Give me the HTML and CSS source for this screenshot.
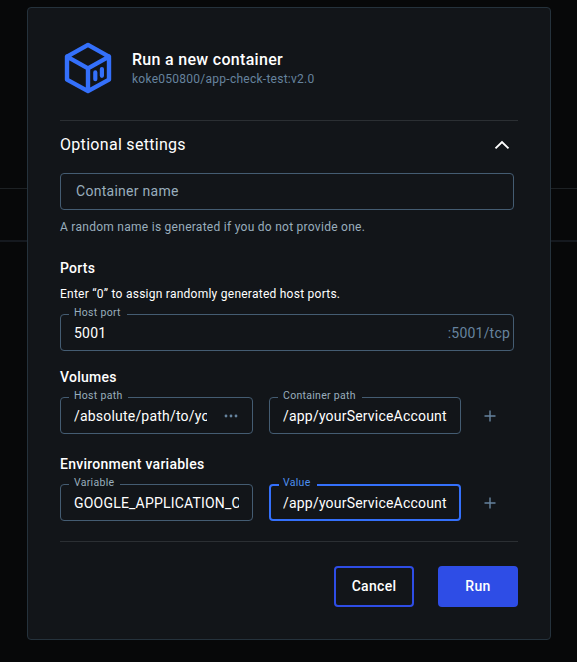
FILE: index.html
```html
<!DOCTYPE html>
<html lang="en">
<head>
<meta charset="utf-8">
<title>Run a new container</title>
<link rel="stylesheet" href="styles.css">
</head>
<body>
<div class="backdrop"><div class="backdrop-row"></div><div class="backdrop-row backdrop-row-second"></div></div>
<main class="dialog">
  <header class="header">
    <svg class="logo" width="48" height="52" viewBox="0 0 48 52" fill="none" stroke="#3470fb" stroke-linejoin="round" stroke-linecap="round">
      <path stroke-width="4.4" d="M24 2.9 45 14.6V37.6L24 49.1 3 37.6V14.6ZM3 14.6 24 26.3 45 14.6M24 26.3V49"/>
      <path stroke-width="4.2" d="M31.3 30.4V37.2M37.9 27V33.8"/>
    </svg>
    <div class="titles">
      <h1 class="title">Run a new container</h1>
      <p class="image-name">koke050800/app-check-test:v2.0</p>
    </div>
  </header>
  <section class="settings">
    <div class="summary">
      <h2 class="summary-title">Optional settings</h2>
      <svg width="16" height="10" viewBox="0 0 16 10" fill="none" stroke="#fff" stroke-width="1.9"><path d="M1.5 8.4 8 2l6.5 6.4"/></svg>
    </div>
    <div class="field field-name"><span class="placeholder">Container name</span></div>
    <p class="helper">A random name is generated if you do not provide one.</p>
    <h3 class="group-title ports-title">Ports</h3>
    <p class="ports-note">Enter “0” to assign randomly generated host ports.</p>
    <div class="field field-port">
      <span class="label">Host port</span>
      <span class="value">5001</span>
      <span class="suffix">:5001/tcp</span>
    </div>
    <h3 class="group-title">Volumes</h3>
    <div class="row">
      <div class="field">
        <span class="label">Host path</span>
        <span class="value">/absolute/path/to/yourServiceAccount</span>
        <svg class="dots" width="14" height="4" viewBox="0 0 14 4" fill="#66839e"><circle cx="2" cy="2" r="1.4"/><circle cx="7" cy="2" r="1.4"/><circle cx="12" cy="2" r="1.4"/></svg>
      </div>
      <div class="field">
        <span class="label">Container path</span>
        <span class="value">/app/yourServiceAccount</span>
      </div>
      <svg class="plus" width="12" height="12" viewBox="0 0 12 12" stroke="#66839e" stroke-width="1.4"><path d="M.5 6h11M6 .5v11"/></svg>
    </div>
    <h3 class="group-title env-title">Environment variables</h3>
    <div class="row">
      <div class="field">
        <span class="label">Variable</span>
        <span class="value">GOOGLE_APPLICATION_CREDENTIALS</span>
      </div>
      <div class="field focused">
        <span class="label">Value</span>
        <span class="value">/app/yourServiceAccount</span>
      </div>
      <svg class="plus" width="12" height="12" viewBox="0 0 12 12" stroke="#66839e" stroke-width="1.4"><path d="M.5 6h11M6 .5v11"/></svg>
    </div>
  </section>
  <footer class="actions">
    <button class="button">Cancel</button>
    <button class="button primary">Run</button>
  </footer>
</main>
</body>
</html>
```
FILE: styles.css
```css
* { box-sizing: border-box; }
body {
  margin: 0;
  height: 662px;
  padding: 7px 26px 0 27px;
  background: #070809;
  font-family: Roboto, sans-serif;
  color: #fff;
  overflow: hidden;
}
h1, h2, h3, p { margin: 0; }
.backdrop { position: absolute; inset: 0; height: 661px; z-index: -1; }
.backdrop-row { height: 189px; border-bottom: 1px solid #1d2124; }
.backdrop-row-second { height: 53px; border-bottom: 2px solid #15191f; }
.dialog {
  width: 524px;
  height: 633px;
  padding: 0 32px;
  background: #121519;
  border: 1px solid #25323c;
  border-radius: 4px;
}
.header {
  display: flex;
  align-items: center;
  gap: 20px;
  height: 113px;
  padding: 7px 0 0 4px;
  border-bottom: 1px solid #2b2f33;
}
.logo { flex: none; }
.titles { padding-top: 2px; }
.title { font-size: 16px; line-height: 20px; font-weight: 500; letter-spacing: .3px; }
.image-name { font-size: 12px; line-height: 18px; letter-spacing: .26px; color: #66839e; }
.settings { height: 421px; border-bottom: 1px solid #2b2f33; }
.summary {
  display: flex;
  align-items: center;
  justify-content: space-between;
  height: 48px;
  padding-right: 8px;
}
.summary-title { font-size: 16px; line-height: 20px; font-weight: 400; letter-spacing: .3px; }
.field {
  position: relative;
  display: flex;
  align-items: center;
  height: 37px;
  padding: 0 13px;
  border: 1px solid #445c72;
  border-radius: 4px;
  font-size: 14px;
  line-height: 20px;
  letter-spacing: .2px;
}
.field-name, .field-port { width: 454px; }
.field-name { margin-top: 4px; padding: 0 15px 1px; color: #99aebd; letter-spacing: .28px; }
.helper { margin-top: 8px; font-size: 12px; line-height: 18px; letter-spacing: .27px; color: #99aebd; }
.group-title { margin-top: 16px; font-size: 14px; line-height: 20px; font-weight: 500; letter-spacing: .26px; }
.ports-title { margin-top: 22px; }
.ports-note { margin-top: 7px; font-size: 12px; line-height: 18px; letter-spacing: .25px; }
.field-port { margin-top: 11px; padding-right: 3px; justify-content: space-between; }
.label {
  position: absolute;
  top: -9px;
  left: 8px;
  padding: 0 6px 0 5px;
  background: #121519;
  color: #99aebd;
  font-size: 10.5px;
  line-height: 14px;
  letter-spacing: .3px;
}
.value { min-width: 0; overflow: hidden; white-space: nowrap; }
.suffix { color: #66839e; }
.row { display: grid; grid-template-columns: 193px 192px 12px; column-gap: 16px; align-items: center; margin-top: 10px; }
.plus { margin-left: 7px; }
.dots { flex: none; margin: 0 1px 0 17px; }
.env-title { margin-top: 20px; }
.focused { border: 2px solid #3470fb; padding: 0 12px; }
.focused .label { top: -10px; left: 8px; padding-left: 4px; color: #4d8ff0; }
.actions { display: flex; justify-content: flex-end; gap: 24px; padding-top: 24px; }
.button {
  width: 80px;
  height: 41px;
  padding: 0 0 1px;
  border: 2px solid #2e4de6;
  border-radius: 4px;
  background: transparent;
  color: #fff;
  font: 500 14px Roboto, sans-serif;
  letter-spacing: .3px;
}
.primary { background: #2e4de6; }
```
